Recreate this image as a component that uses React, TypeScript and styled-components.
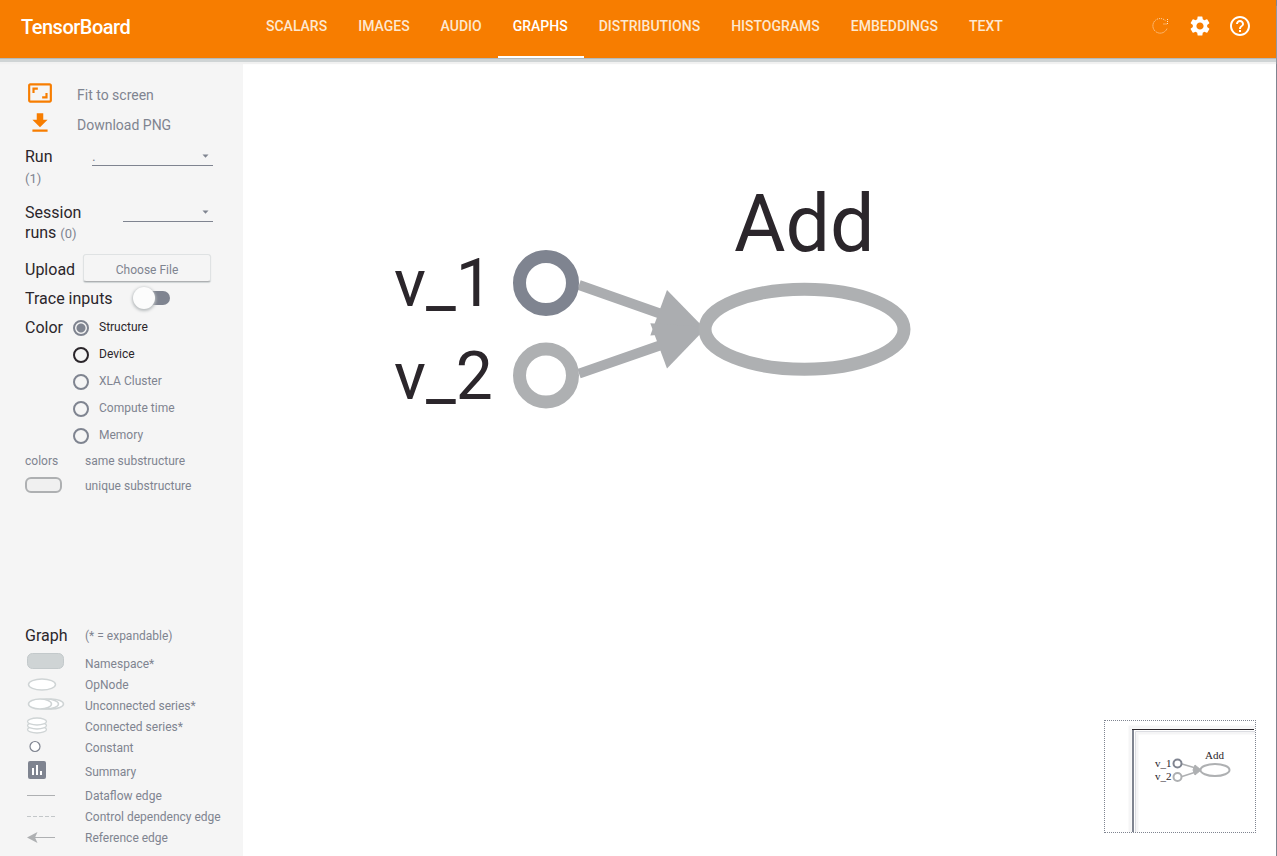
import React from "react";
import styled, { createGlobalStyle } from "styled-components";
import { MdAspectRatio, MdSettings, MdHelpOutline } from "react-icons/md";

const orange = "#f77d00";
const ink = "#2b262b";
const slate = "#7f8490";
const silver = "#aeb0b2";
const pale = "#cfd4d5";

const GlobalStyle = createGlobalStyle`
  *, *::before, *::after { box-sizing: border-box; }
  body { margin: 0; background: #fff; color: ${ink}; font-family: Roboto, "Liberation Sans", sans-serif; }
  button, select, input { font-family: inherit; margin: 0; }
`;

const Page = styled.div`
  display: flex;
  flex-direction: column;
  min-height: 100vh;
  border-right: 1px solid ${slate};
`;

const Header = styled.header`
  display: flex;
  height: 58px;
  background: ${orange};
  color: #fff;
  position: relative;
  z-index: 1;
  box-shadow: 0 1px 0 #b3b9bb, 0 4px 0 ${pale}, 0 6px 1px #f1f1f1;
`;

const Brand = styled.h1`
  margin: 0;
  padding-left: 21px;
  flex: 0 0 251px;
  font-size: 20px;
  font-weight: 500;
  line-height: 54px;
  letter-spacing: -0.025em;
`;

const Tabs = styled.nav`
  display: flex;
`;

const Tab = styled.a<{ $active?: boolean }>`
  padding: 0 16px 0 15px;
  border-bottom: 2px solid ${(p) => (p.$active ? "#fff" : "transparent")};
  color: ${(p) => (p.$active ? "#fff" : "#fde8d0")};
  font-size: 14px;
  font-weight: 500;
  line-height: 53px;
  text-decoration: none;
  white-space: nowrap;
`;

const Actions = styled.div`
  display: flex;
  height: 52px;
  align-items: center;
  gap: 16px;
  margin-left: auto;
  padding-right: 24px;
`;

const IconButton = styled.button`
  display: flex;
  padding: 0;
  border: 0;
  background: none;
  color: #fff;
  cursor: pointer;
`;

const Main = styled.div`
  display: flex;
  flex: 1;
`;

const Sidebar = styled.aside`
  display: flex;
  flex-direction: column;
  justify-content: space-between;
  flex: 0 0 243px;
  padding: 22px 0 8px;
  background: #f5f5f5;
`;

const Controls = styled.div`
  display: flex;
  flex-direction: column;
  padding: 0 30px 0 25px;
`;

const ActionRow = styled.button`
  display: flex;
  gap: 24px;
  height: 30px;
  padding: 0 2px;
  border: 0;
  background: none;
  color: ${slate};
  font-size: 14px;
  line-height: 30px;
  text-align: left;
  cursor: pointer;
  svg { color: ${orange}; }
`;

const Field = styled.div<{ $gap: number }>`
  display: flex;
  align-items: flex-start;
  margin-top: ${(p) => p.$gap}px;
`;

const FieldLabel = styled.label<{ $width: number }>`
  flex: 0 0 ${(p) => p.$width}px;
  padding-top: 1px;
  font-size: 16px;
  line-height: 20px;
`;

const Count = styled.span<{ $block?: boolean }>`
  display: ${(p) => (p.$block ? "block" : "inline")};
  color: ${slate};
  font-size: 13px;
  line-height: ${(p) => (p.$block ? 23 : 20)}px;
`;

const SelectWrap = styled.div`
  position: relative;
  flex: 1;
  svg { position: absolute; right: 4px; top: 8px; pointer-events: none; }
`;

const Select = styled.select`
  display: block;
  width: 100%;
  height: 20px;
  padding: 2px 16px 0 0;
  border: 0;
  border-bottom: 1px solid ${slate};
  border-radius: 0;
  appearance: none;
  background: none;
  color: ${slate};
  font-size: 14px;
  line-height: 17px;
`;

const Row = styled.div<{ $height: number }>`
  display: flex;
  align-items: center;
  height: ${(p) => p.$height}px;
  font-size: 16px;
`;

const FileButton = styled.button`
  flex: 1;
  height: 28px;
  margin: 0 2px 0 8px;
  padding: 4px 0 0;
  border: 1px solid #dfe2e3;
  border-bottom-color: ${silver};
  border-radius: 3px;
  background: #f5f5f5;
  color: ${slate};
  font-size: 12px;
  box-shadow: 0 1px 1px ${pale};
`;

const Switch = styled.input`
  appearance: none;
  position: relative;
  width: 32px;
  height: 14px;
  margin-left: 25px;
  border-radius: 7px;
  background: ${slate};
  cursor: pointer;
  &::before {
    content: "";
    position: absolute;
    left: -5px;
    top: -4px;
    width: 22px;
    height: 22px;
    border-radius: 50%;
    background: #fcfcfc;
    box-shadow: 0 1px 3px 1px #b9bdbf;
  }
  &:checked::before { left: 14px; }
`;

const ColorGroup = styled.fieldset`
  display: grid;
  grid-template-columns: 48px 1fr;
  min-width: 0;
  margin: 2px 0 0;
  padding: 0;
  border: 0;
  line-height: 27px;
`;

const RadioLabel = styled.label<{ $muted?: boolean }>`
  display: flex;
  align-items: center;
  gap: 10px;
  grid-column: 2;
  height: 27px;
  color: ${(p) => (p.$muted ? slate : ink)};
  font-size: 12px;
`;

const Radio = styled.input<{ $dark?: boolean }>`
  appearance: none;
  width: 16px;
  height: 16px;
  border: 2px solid ${(p) => (p.$dark ? ink : slate)};
  border-radius: 50%;
  &:checked { background: radial-gradient(circle, ${slate} 4px, transparent 5px); }
`;

const Legend = styled.ul`
  margin: 0;
  padding: 0 0 0 25px;
  list-style: none;
`;

const LegendItem = styled.li<{ $height: number }>`
  display: grid;
  grid-template-columns: 60px 1fr;
  align-items: center;
  height: ${(p) => p.$height}px;
  color: ${slate};
  font-size: 12px;
  white-space: nowrap;
`;

const Heading = styled.h2`
  margin: 0;
  color: ${ink};
  font-size: 16px;
  font-weight: 400;
`;

const Canvas = styled.main`
  position: relative;
  display: flex;
  flex: 1;
  min-width: 0;
`;

const GraphSvg = styled.svg`
  flex: 1;
  min-width: 0;
  font-family: Roboto, sans-serif;
  fill: ${ink};
`;

const Minimap = styled.div`
  position: absolute;
  right: 20px;
  bottom: 23px;
  width: 152px;
  height: 113px;
  border: 1px dotted ${slate};
  background: #fff;
  svg { display: block; font-family: "Liberation Serif", serif; font-size: 11px; fill: ${ink}; }
`;

const tabs = ["SCALARS", "IMAGES", "AUDIO", "GRAPHS", "DISTRIBUTIONS", "HISTOGRAMS", "EMBEDDINGS", "TEXT"];

const colorModes = [
  { name: "Structure" },
  { name: "Device", dark: true },
  { name: "XLA Cluster", muted: true },
  { name: "Compute time", muted: true },
  { name: "Memory", muted: true },
];

const Caret = () => (
  <svg width="7" height="4" viewBox="0 0 7 4" aria-hidden="true">
    <path d="M0.5 0.5h6L3.5 3.8z" fill={slate} />
  </svg>
);

const DownloadIcon = () => (
  <svg width="26" height="26" viewBox="0 0 24 24" fill="currentColor" aria-hidden="true">
    <path d="M19 9h-4V3H9v6H5l7 7 7-7zM5 18v2h14v-2H5z" />
  </svg>
);

const RefreshIcon = () => (
  <svg width="24" height="24" viewBox="0 0 24 24" fill="none" stroke="#fde4c8" strokeDasharray="1 1" aria-hidden="true">
    <path d="M17.5 6.8A7.3 7.3 0 1 0 19 14.5M19.5 5v5H15" />
  </svg>
);

const Symbol = ({ children }: { children: React.ReactNode }) => (
  <svg width="42" height="21" viewBox="0 0 42 21" fill="#fff" stroke={pale} aria-hidden="true">
    {children}
  </svg>
);

const legend = [
  {
    name: "Namespace*",
    height: 21,
    icon: <Symbol><rect x="2.5" y="0.5" width="36" height="15" rx="5" fill={pale} stroke="#c3c9cb" /></Symbol>,
  },
  { name: "OpNode", height: 21, icon: <Symbol><ellipse cx="17" cy="10.5" rx="13.5" ry="5.5" strokeWidth="1.5" /></Symbol> },
  {
    name: "Unconnected series*",
    height: 21,
    icon: (
      <Symbol>
        <ellipse cx="26" cy="9" rx="12.5" ry="5" strokeWidth="1.5" />
        <ellipse cx="21" cy="9" rx="12.5" ry="5" strokeWidth="1.5" />
        <ellipse cx="15" cy="9" rx="11.5" ry="5" strokeWidth="1.5" />
      </Symbol>
    ),
  },
  {
    name: "Connected series*",
    height: 21,
    icon: (
      <Symbol>
        <ellipse cx="12" cy="13.5" rx="9.5" ry="3.5" strokeWidth="1.3" />
        <ellipse cx="12" cy="9.5" rx="9.5" ry="3.5" strokeWidth="1.3" />
        <ellipse cx="12" cy="5.5" rx="9.5" ry="3.5" strokeWidth="1.3" />
      </Symbol>
    ),
  },
  { name: "Constant", height: 21, icon: <Symbol><circle cx="10" cy="9.5" r="5" stroke={slate} strokeWidth="1.2" /></Symbol> },
  {
    name: "Summary",
    height: 27,
    icon: (
      <Symbol>
        <rect x="3" y="0" width="18" height="18" rx="2" fill={slate} stroke="none" />
        <path d="M8 7v7M12 4v10M16 10v4" stroke="#fff" strokeWidth="2" />
      </Symbol>
    ),
  },
  { name: "Dataflow edge", height: 21, icon: <Symbol><path d="M2 10.5h28" stroke={silver} /></Symbol> },
  { name: "Control dependency edge", height: 21, icon: <Symbol><path d="M2 10.5h28" stroke="#c3c7c9" strokeDasharray="4 2" /></Symbol> },
  {
    name: "Reference edge",
    height: 21,
    icon: <Symbol><path d="M9 10.5h21" stroke={silver} /><path d="M2 10.5L12.5 5l-2.5 5.5 2.5 5.5z" fill={silver} stroke="none" /></Symbol>,
  },
];

const Graph = () => (
  <GraphSvg role="img" aria-label="Graph of v_1 and v_2 feeding Add">
    <g fill="#abadb0">
      <path d="M336 227L424 258M336 315.6L424 285" stroke="#abadb0" strokeWidth="10" />
      <path d="M424 232L407.3 277.500 464 273z" />
      <path d="M424 310.6L407.3 265.2 464 269z" />
    </g>
    <g fill="#fff" stroke={silver} strokeWidth="13">
      <circle cx="303" cy="225" r="26.5" stroke={slate} />
      <circle cx="303" cy="317.5" r="26.5" />
      <ellipse cx="561.5" cy="271.3" rx="99.5" ry="40" />
    </g>
    <text x="151" y="248" fontSize="66">v_1</text>
    <text x="151" y="341" fontSize="66">v_2</text>
    <text x="491" y="193" fontSize="79">Add</text>
  </GraphSvg>
);

const MinimapGraph = () => (
  <svg width="150" height="111" viewBox="0 0 150 111" aria-hidden="true">
    <path d="M25 111V6H150M32 111V12H150" fill="none" stroke="#f5f5f6" strokeWidth="3" />
    <path d="M30.5 111V10.5H150" fill="none" stroke="#dcdde2" />
    <path d="M28 111V8" stroke={slate} strokeWidth="2" />
    <path d="M27 8.5H149" stroke={ink} />
    <g fill="none" stroke={silver} strokeWidth="1.5">
      <path d="M77 43L94 48M77 55.5L94 50" />
      <circle cx="72.5" cy="42.5" r="4" stroke={slate} strokeWidth="2" />
      <circle cx="72.5" cy="56" r="4" strokeWidth="2" />
      <ellipse cx="110" cy="49" rx="14.5" ry="6" strokeWidth="2" />
    </g>
    <path d="M90 44l6 5-6 5-2-5z" fill={silver} stroke={silver} />
    <text x="50" y="46">v_1</text>
    <text x="50" y="59">v_2</text>
    <text x="100" y="38">Add</text>
  </svg>
);

export default function App() {
  return (
    <>
      <GlobalStyle />
      <Page>
        <Header>
          <Brand>TensorBoard</Brand>
          <Tabs>
            {tabs.map((t) => (
              <Tab key={t} href={`#${t.toLowerCase()}`} $active={t === "GRAPHS"}>{t}</Tab>
            ))}
          </Tabs>
          <Actions>
            <IconButton aria-label="Reload" disabled><RefreshIcon /></IconButton>
            <IconButton aria-label="Settings"><MdSettings size={24} /></IconButton>
            <IconButton aria-label="Help"><MdHelpOutline size={24} /></IconButton>
          </Actions>
        </Header>
        <Main>
          <Sidebar>
            <Controls>
              <ActionRow><MdAspectRatio size={26} />Fit to screen</ActionRow>
              <ActionRow><DownloadIcon />Download PNG</ActionRow>
              <Field $gap={6}>
                <FieldLabel htmlFor="run" $width={67}>Run<Count $block>(1)</Count></FieldLabel>
                <SelectWrap>
                  <Select id="run"><option>.</option></Select>
                  <Caret />
                </SelectWrap>
              </Field>
              <Field $gap={12}>
                <FieldLabel htmlFor="session" $width={98}>Session<br />runs <Count>(0)</Count></FieldLabel>
                <SelectWrap>
                  <Select id="session"><option></option></Select>
                  <Caret />
                </SelectWrap>
              </Field>
              <Field $gap={10}>
                <Row as="label" htmlFor="upload" $height={30}>Upload</Row>
                <FileButton id="upload">Choose File</FileButton>
              </Field>
              <Row $height={28}>
                <label htmlFor="trace">Trace inputs</label>
                <Switch id="trace" type="checkbox" role="switch" />
              </Row>
              <ColorGroup aria-labelledby="color-title">
                <span id="color-title">Color</span>
                {colorModes.map((m) => (
                  <RadioLabel key={m.name} $muted={m.muted}>
                    <Radio type="radio" name="color" defaultChecked={m.name === "Structure"} $dark={m.dark} />
                    {m.name}
                  </RadioLabel>
                ))}
              </ColorGroup>
              <LegendItem as="div" $height={24}><span>colors</span><span>same substructure</span></LegendItem>
              <LegendItem as="div" $height={25}>
                <Symbol><rect x="1" y="3" width="35" height="14" rx="5" fill="#f0f0f0" stroke={silver} strokeWidth="2" /></Symbol>
                <span>unique substructure</span>
              </LegendItem>
            </Controls>
            <Legend>
              <LegendItem $height={35}><Heading>Graph</Heading><span>(* = expandable)</span></LegendItem>
              {legend.map((l) => (
                <LegendItem key={l.name} $height={l.height}>{l.icon}<span>{l.name}</span></LegendItem>
              ))}
            </Legend>
          </Sidebar>
          <Canvas>
            <Graph />
            <Minimap><MinimapGraph /></Minimap>
          </Canvas>
        </Main>
      </Page>
    </>
  );
}
